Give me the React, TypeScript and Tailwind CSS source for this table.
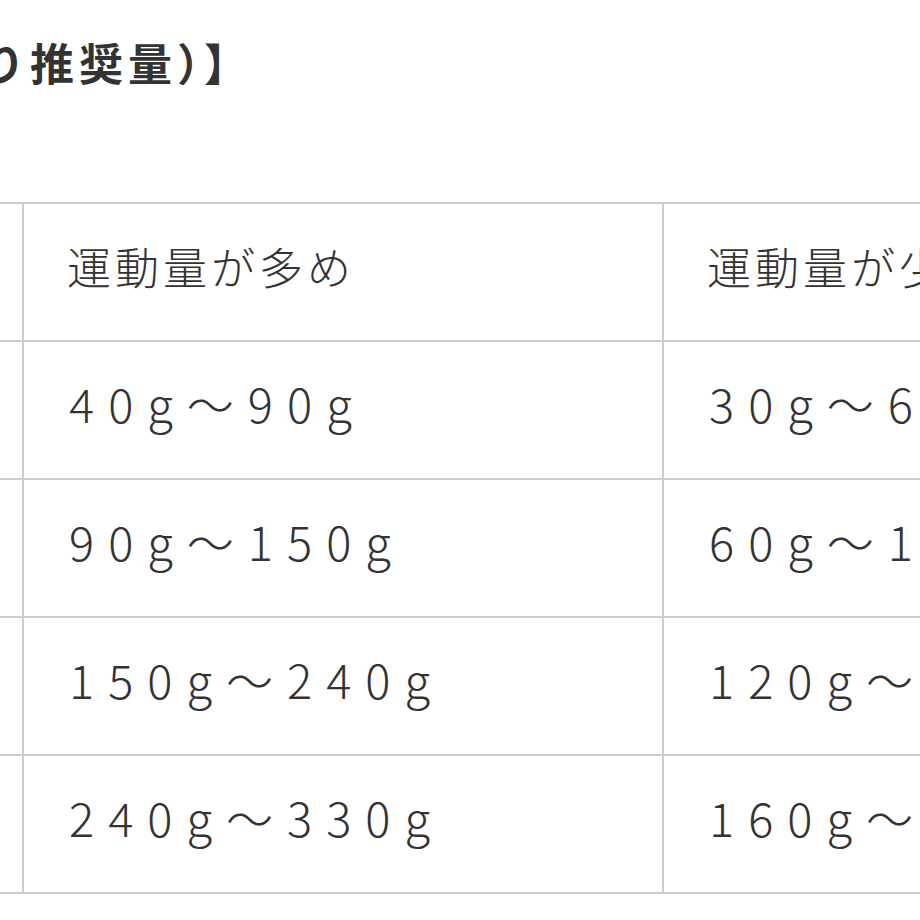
import React from "react";

const rows: [string, string][] = [
  ["40g〜90g", "30g〜60g"],
  ["90g〜150g", "60g〜120g"],
  ["150g〜240g", "120g〜160g"],
  ["240g〜330g", "160g〜220g"],
];

export default function App() {
  return (
    <div
      className="w-[920px] h-[920px] overflow-hidden bg-white text-[#333333]"
      style={{ fontFamily: '"Noto Sans CJK JP", "Noto Sans", sans-serif' }}
    >
      <div className="h-[202px] pt-[34px]">
        <div className="-ml-[166px] whitespace-nowrap text-[44px] font-bold leading-[56px] tracking-[5px] text-[#333333]">
          日あたり推奨量）】
        </div>
      </div>
      <table className="-ml-[178px] w-[1480px] min-w-[1480px] table-fixed border-collapse">
        <colgroup>
          <col className="w-[200px]" />
          <col className="w-[640px]" />
          <col className="w-[640px]" />
        </colgroup>
        <tbody>
          <tr className="h-[138px]">
            <td className="border-2 border-[#cccccc]"></td>
            <td className="border-2 border-[#cccccc] pl-[43px] pb-[12px] text-[44px] font-light tracking-[4px] whitespace-nowrap">
              運動量が多め
            </td>
            <td className="border-2 border-[#cccccc] pl-[43px] pb-[12px] text-[44px] font-light tracking-[4px] whitespace-nowrap">
              運動量が少なめ
            </td>
          </tr>
          {rows.map((r, i) => (
            <tr key={i} className="h-[138px]">
              <td className="border-2 border-[#cccccc]"></td>
              <td className="border-2 border-[#cccccc] pl-[45px] pb-[14px] text-[47px] font-light tracking-[14px] whitespace-nowrap">
                {r[0]}
              </td>
              <td className="border-2 border-[#cccccc] pl-[45px] pb-[14px] text-[47px] font-light tracking-[14px] whitespace-nowrap">
                {r[1]}
              </td>
            </tr>
          ))}
        </tbody>
      </table>
    </div>
  );
}
